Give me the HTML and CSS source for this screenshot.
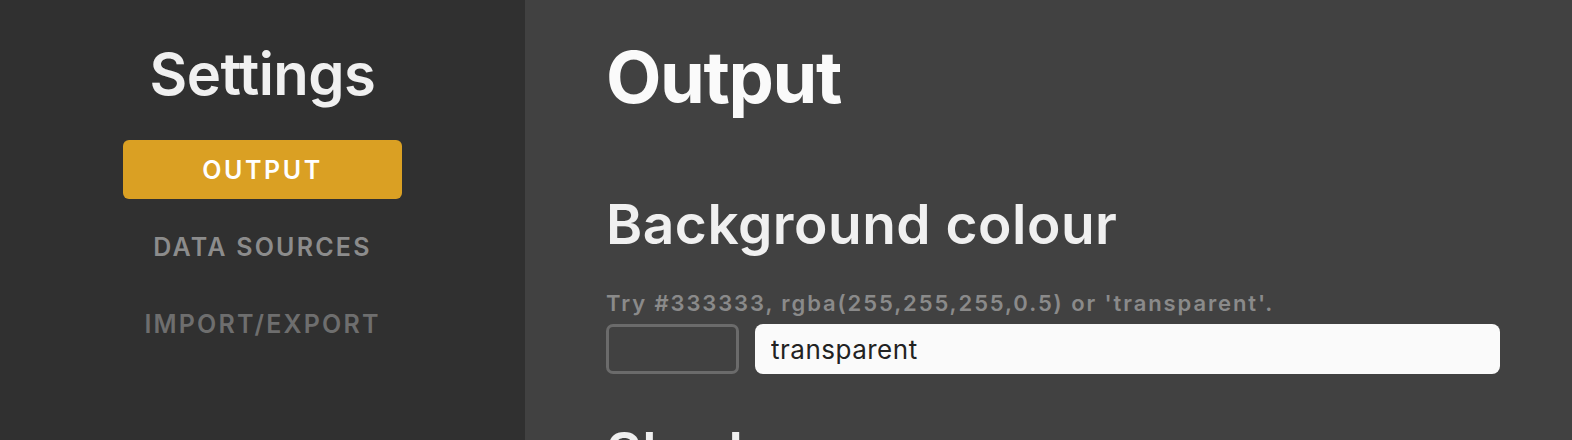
FILE: index.html
```html
<!DOCTYPE html>
<html lang="en">
<head>
  <meta charset="UTF-8" />
  <meta name="viewport" content="width=device-width, initial-scale=1.0" />
  <title>Settings</title>
  <link rel="stylesheet" href="styles.css">
</head>
<body>
  <aside class="sidebar">
    <h1 class="sidebar-title">Settings</h1>
    <nav class="nav">
      <a class="nav-item active" href="#output">OUTPUT</a>
      <a class="nav-item" href="#sources">DATA SOURCES</a>
      <a class="nav-item muted" href="#import">IMPORT/EXPORT</a>
    </nav>
  </aside>
  <main class="content">
    <h1 class="page-title">Output</h1>
    <section class="field">
      <h2 class="field-title">Background colour</h2>
      <p class="hint">Try #333333, rgba(255,255,255,0.5) or 'transparent'.</p>
      <div class="color-row">
        <div class="swatch"></div>
        <input class="text-input" type="text" value="transparent">
      </div>
    </section>
    <section class="field">
      <h2 class="field-title next">Shadow</h2>
    </section>
  </main>
</body>
</html>
```

FILE: styles.css
```css
html, body {
  height: 100%;
}
body {
  margin: 0;
  display: flex;
  overflow: hidden;
  font-family: Inter, "Noto Sans", sans-serif;
  background: #414141;
  color: #f2f2f2;
}
.sidebar {
  width: 525px;
  flex-shrink: 0;
  background: #303030;
  display: flex;
  flex-direction: column;
  align-items: center;
  padding-top: 45px;
}
.sidebar-title {
  margin: 0;
  font-size: 58px;
  line-height: 1;
  font-weight: 600;
  letter-spacing: -0.5px;
  color: #f0f0f0;
}
.nav {
  margin-top: 37px;
  display: flex;
  flex-direction: column;
  gap: 18px;
  width: 279px;
}
.nav-item {
  height: 59px;
  display: flex;
  align-items: center;
  justify-content: center;
  border-radius: 6px;
  font-size: 25px;
  font-weight: 600;
  letter-spacing: 2.2px;
  text-decoration: none;
  color: #8c8c8c;
}
.nav-item.active {
  background: #daa023;
  color: #fff;
  letter-spacing: 2.6px;
}
.nav-item.muted {
  color: #6e6e6e;
}
.content {
  flex: 1;
  padding: 41px 72px 0 81px;
}
.page-title {
  margin: 0;
  font-size: 72px;
  line-height: 1;
  font-weight: 700;
  letter-spacing: -1.4px;
  color: #fafafa;
}
.field-title {
  margin: 84px 0 0;
  font-size: 55px;
  line-height: 1;
  font-weight: 600;
  letter-spacing: 0.5px;
  color: #f0f0f0;
}
.field-title.next {
  margin-top: 51px;
}
.hint {
  margin: 40px 0 0;
  font-size: 22px;
  line-height: 1;
  font-weight: 600;
  letter-spacing: 1.9px;
  color: #8a8a8a;
}
.color-row {
  display: flex;
  gap: 16px;
  margin-top: 10px;
}
.swatch {
  width: 127px;
  height: 44px;
  border: 3px solid #6b6b6b;
  border-radius: 7px;
}
.text-input {
  flex: 1;
  height: 50px;
  box-sizing: border-box;
  border: none;
  border-radius: 8px;
  background: #fafafa;
  padding: 0 16px;
  font-family: Inter, "Noto Sans", sans-serif;
  font-size: 26px;
  letter-spacing: 0.5px;
  color: #222;
  outline: none;
}
```
